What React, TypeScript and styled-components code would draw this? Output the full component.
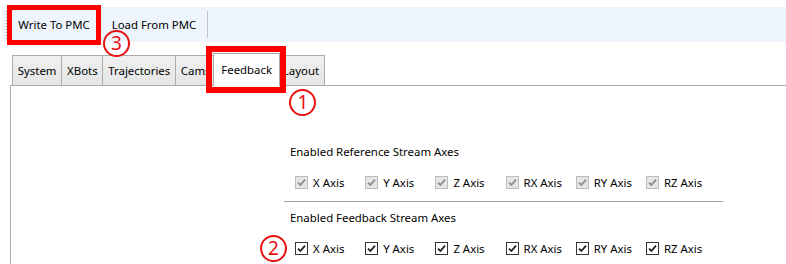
import React from 'react';
import styled, { createGlobalStyle } from 'styled-components';

const GlobalStyle = createGlobalStyle`
 html, body {
  margin: 0;
  padding: 0;
  background: #fff;
 }
 body {
  font-family: 'Noto Sans', 'Open Sans', sans-serif;
  font-size: 11.4px;
  color: #000;
 }
`;

const Page = styled.div`
 position: relative;
 width: 786px;
 height: 264px;
 overflow: hidden;
 padding-top: 7px;
 box-sizing: border-box;
 display: flex;
 flex-direction: column;
`;

const Toolbar = styled.div`
 display: flex;
 align-items: center;
 height: 35px;
 margin-left: 3px;
 padding-left: 3px;
 background: #edf4fc;
`;

const Grip = styled.div`
 width: 1px;
 height: 28px;
 background: repeating-linear-gradient(to bottom, #8a8a8a 0 1px, transparent 1px 3px);
`;

const ToolButton = styled.div<{ $width: number }>`
 position: relative;
 display: flex;
 align-items: center;
 justify-content: center;
 height: 100%;
 width: ${(p) => p.$width}px;
 white-space: nowrap;
`;

const ToolSeparator = styled.div`
 width: 1px;
 height: 27px;
 background: #c2c2c2;
`;

const Outline = styled.div<{ $w: number }>`
 position: absolute;
 border: ${(p) => p.$w}px solid #f00;
 pointer-events: none;
 z-index: 5;
`;

const Marker = styled.div`
 position: absolute;
 width: 27px;
 height: 27px;
 box-sizing: border-box;
 border: 2px solid #e81010;
 border-radius: 50%;
 color: #e81010;
 font-family: 'Noto Sans', sans-serif;
 font-size: 19px;
 line-height: 23px;
 text-align: center;
 z-index: 6;
`;

const TabControl = styled.div`
 flex: 1;
 display: flex;
 flex-direction: column;
 margin: 11px 0 0 10px;
`;

const TabStrip = styled.div`
 display: flex;
 align-items: flex-end;
 height: 32px;
 padding-left: 3px;
 position: relative;
 z-index: 2;
`;

const Tab = styled.div<{ $selected?: boolean }>`
 position: relative;
 box-sizing: border-box;
 display: flex;
 align-items: center;
 padding: 0 4.8px;
 white-space: nowrap;
 border: 1px solid #acacac;
 border-bottom: none;
 margin-left: -1px;
 height: ${(p) => (p.$selected ? '33px' : '30px')};
 margin-bottom: ${(p) => (p.$selected ? '-1px' : '0')};
 background: ${(p) => (p.$selected ? '#fff' : 'linear-gradient(#f0f0f0, #e5e5e5)')};
 ${(p) => p.$selected && 'margin-left: -3px; margin-right: -2px; padding: 0 7px 2px; z-index: 3;'}
`;

const Panel = styled.div`
 flex: 1;
 border-top: 1px solid #acacac;
 border-left: 1px solid #acacac;
 background: #fff;
 padding-left: 273px;
`;

const Section = styled.div`
 width: 439px;
 padding-top: 58px;
`;

const Heading = styled.div`
 padding-left: 6px;
 line-height: 16px;
 height: 16px;
`;

const CheckRow = styled.div`
 position: relative;
 display: flex;
 margin-top: 14px;
 padding-left: 11px;
 height: 16px;
`;

const CheckItem = styled.label`
 display: flex;
 align-items: center;
 width: 70.2px;
 flex: none;
 gap: 5px;
 white-space: nowrap;
`;

const Box = styled.span<{ $disabled?: boolean }>`
 box-sizing: border-box;
 width: 13px;
 height: 13px;
 flex: none;
 display: flex;
 align-items: center;
 justify-content: center;
 border: 1px solid ${(p) => (p.$disabled ? '#bcbcbc' : '#333')};
 background: ${(p) => (p.$disabled ? '#e6e6e6' : '#fff')};
`;

const Divider = styled.div`
 height: 1px;
 background: #a0a0a0;
 margin: 11px 0 8px;
`;

const axes = ['X Axis', 'Y Axis', 'Z Axis', 'RX Axis', 'RY Axis', 'RZ Axis'];

const Check = ({ label, disabled }: { label: string; disabled?: boolean }) => (
 <CheckItem>
  <Box $disabled={disabled}>
   <svg width='9' height='9' viewBox='0 0 9 9'>
    <path d='M1 4.6 L3.4 7 L8 1.6' fill='none' stroke={disabled ? '#8c8c8c' : '#222'} strokeWidth='1.8' />
   </svg>
  </Box>
  <span>{label}</span>
 </CheckItem>
);

const tabs = ['System', 'XBots', 'Trajectories', 'Cams', 'Feedback', 'Layout'];

export default function App() {
 return (
  <>
   <GlobalStyle />
   <Page>
    <Toolbar>
     <Grip />
     <ToolButton $width={94}>
      Write To PMC
      <Outline $w={5} style={{ left: 0, right: 0, top: -2, height: 30 }} />
      <Marker style={{ left: 96, top: 23 }}>3</Marker>
     </ToolButton>
     <ToolButton $width={106}>Load From PMC</ToolButton>
     <ToolSeparator />
    </Toolbar>
    <TabControl>
     <TabStrip>
      {tabs.map((t) =>
       t === 'Feedback' ? (
        <Tab key={t} $selected>
         {t}
         <Outline $w={6} style={{ left: -8, right: -7, top: -8, bottom: -7 }} />
         <Marker style={{ left: 75, top: 35 }}>1</Marker>
        </Tab>
       ) : (
        <Tab key={t}>{t}</Tab>
       )
      )}
     </TabStrip>
     <Panel>
      <Section>
       <Heading>Enabled Reference Stream Axes</Heading>
       <CheckRow>
        {axes.map((a) => (
         <Check key={a} label={a} disabled />
        ))}
       </CheckRow>
       <Divider />
       <Heading>Enabled Feedback Stream Axes</Heading>
       <CheckRow>
        <Marker style={{ left: -24, top: -5 }}>2</Marker>
        {axes.map((a) => (
         <Check key={a} label={a} />
        ))}
       </CheckRow>
      </Section>
     </Panel>
    </TabControl>
   </Page>
  </>
 );
}
